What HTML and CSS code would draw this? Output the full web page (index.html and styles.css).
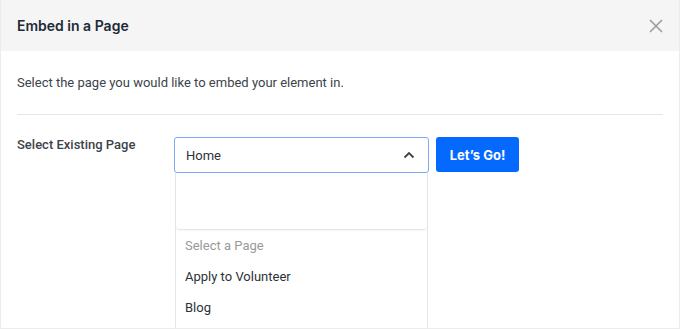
FILE: index.html
```html
<!DOCTYPE html>
<html lang="en">
<head>
  <meta charset="UTF-8" />
  <meta name="viewport" content="width=device-width, initial-scale=1" />
  <title>Embed in a Page</title>
  <link rel="stylesheet" href="styles.css">
</head>
<body>
  <div class="modal">
    <div class="modal-header">
      <h2>Embed in a Page</h2>
      <button type="button" class="close-btn" aria-label="Close">
        <svg width="14" height="14" viewBox="0 0 14 14">
          <path d="M1 1 L13 13 M13 1 L1 13" stroke="#9a9a9a" stroke-width="1.5" fill="none" />
        </svg>
      </button>
    </div>
    <div class="modal-body">
      <p class="intro">Select the page you would like to embed your element in.</p>
      <div class="field-row">
        <label class="field-label">Select Existing Page</label>
        <div class="select">
          <div class="select-control">
            <span>Home</span>
            <svg width="12" height="8" viewBox="0 0 12 8">
              <path d="M1.5 6.5 L6 2 L10.5 6.5" stroke="#3c434a" stroke-width="1.8" fill="none" />
            </svg>
          </div>
          <div class="select-menu">
            <div class="select-search"></div>
            <ul class="options">
              <li class="placeholder">Select a Page</li>
              <li>Apply to Volunteer</li>
              <li>Blog</li>
            </ul>
          </div>
        </div>
        <button type="button" class="btn">Let’s Go!</button>
      </div>
    </div>
  </div>
</body>
</html>
```

FILE: styles.css
```css
body {
  margin: 0;
  font-family: Roboto, "Liberation Sans", sans-serif;
  background: #fff;
  color: #3c434a;
}

.modal {
  height: 328px;
  border: 1px solid #ececec;
  border-top: none;
  overflow: hidden;
}

.modal-header {
  height: 51px;
  display: flex;
  align-items: center;
  justify-content: space-between;
  padding: 0 16px;
  background-color: #f5f5f5;
}

.modal-header h2 {
  margin: 0;
  font-family: Inter, Roboto, sans-serif;
  font-size: 14px;
  font-weight: 600;
  color: #1d2a36;
}

.close-btn {
  background: none;
  border: none;
  padding: 0;
  display: flex;
  cursor: pointer;
}

.modal-body {
  padding: 0 16px;
}

.intro {
  margin: 0;
  padding: 23px 0 22px;
  font-size: 13px;
  line-height: 18px;
  border-bottom: 1px solid #e6e6e6;
}

.field-row {
  display: flex;
  align-items: flex-start;
  padding-top: 22px;
}

.field-label {
  width: 157px;
  font-size: 13px;
  font-weight: 500;
  line-height: 14px;
  padding-top: 1px;
}

.select {
  position: relative;
  width: 255px;
}

.select-control {
  height: 34px;
  display: flex;
  align-items: center;
  justify-content: space-between;
  padding: 0 13px 0 11px;
  border: 1px solid #7fa9f6;
  border-radius: 3px;
  font-size: 13px;
  color: #2c3338;
}

/* open dropdown overlays the rest of the form */
.select-menu {
  position: absolute;
  top: 36px;
  left: 1px;
  right: 1px;
  border: 1px solid #e4e6e9;
  border-top: none;
  background: #fff;
}

.select-search {
  height: 56px;
  border-bottom: 1px solid #e4e6e9;
  border-radius: 0 0 4px 4px;
  box-shadow: 0 1px 2px rgba(0, 0, 0, 0.04);
}

.options {
  list-style: none;
  margin: 0;
  padding: 0 0 40px;
}

.options li {
  height: 31px;
  line-height: 31px;
  padding-left: 9px;
  font-size: 13px;
  color: #2c3338;
}

.options .placeholder {
  color: #9a9a9a;
}

.btn {
  margin-left: 7px;
  width: 83px;
  height: 35px;
  background-color: #0469ff;
  color: #fff;
  border: none;
  border-radius: 3px;
  font-family: Inter, Roboto, sans-serif;
  font-size: 13px;
  font-weight: 700;
  cursor: pointer;
}
```
